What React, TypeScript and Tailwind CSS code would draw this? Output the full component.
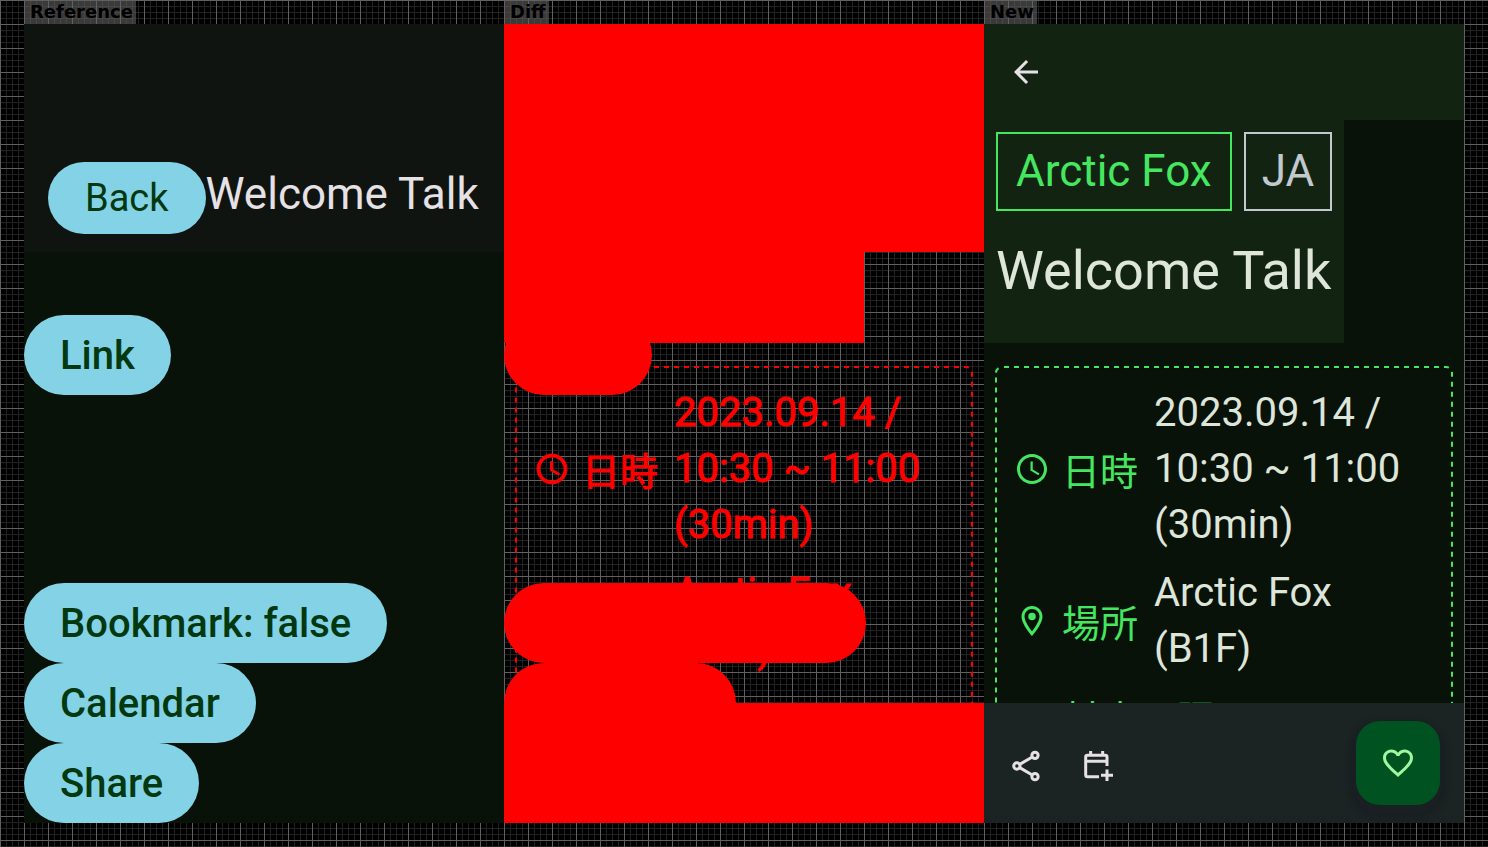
import React from "react";

const gridLines =
  "bg-black bg-[linear-gradient(to_right,#616161_1px,transparent_1px),linear-gradient(to_bottom,#616161_1px,transparent_1px),linear-gradient(to_right,#222222_1px,transparent_1px),linear-gradient(to_bottom,#222222_1px,transparent_1px)] bg-[size:24px_24px,24px_24px,6px_6px,6px_6px]";

const BACK = "M20 11H7.83l5.59-5.59L12 4l-8 8 8 8 1.41-1.41L7.83 13H20v-2z";
const CLOCK =
  "M11.99 2C6.47 2 2 6.48 2 12s4.47 10 9.99 10C17.52 22 22 17.52 22 12S17.52 2 11.99 2zM12 20c-4.42 0-8-3.58-8-8s3.58-8 8-8 8 3.58 8 8-3.58 8-8 8zm.5-13H11v6l5.25 3.15.75-1.23-4.5-2.67z";
const PIN =
  "M12 2C8.13 2 5 5.13 5 9c0 5.25 7 13 7 13s7-7.75 7-13c0-3.87-3.13-7-7-7zM7 9c0-2.76 2.24-5 5-5s5 2.24 5 5c0 2.88-2.88 7.19-5 9.88C9.92 16.21 7 11.85 7 9zM14.5 9a2.5 2.5 0 1 1-5 0 2.5 2.5 0 0 1 5 0z";
const HEART =
  "M16.5 3c-1.74 0-3.41.81-4.5 2.09C10.91 3.81 9.24 3 7.5 3 4.42 3 2 5.42 2 8.5c0 3.78 3.4 6.86 8.55 11.54L12 21.35l1.45-1.32C18.6 15.36 22 12.28 22 8.5 22 5.42 19.58 3 16.5 3zm-4.4 15.55l-.1.1-.1-.1C7.14 14.24 4 11.39 4 8.5 4 6.5 5.5 5 7.5 5c1.54 0 3.04.99 3.57 2.36h1.87C13.46 5.99 14.96 5 16.5 5c2 0 3.5 1.5 3.5 3.5 0 2.89-3.14 5.74-7.9 10.05z";

function Icon({ path, bold }: { path: string; bold?: boolean }) {
  return (
    <svg
      viewBox="0 0 24 24"
      className={`size-9 shrink-0 fill-current ${bold ? "stroke-current" : ""}`}
      strokeWidth={bold ? 0.6 : 0}
      aria-hidden="true"
    >
      <path d={path} />
    </svg>
  );
}

function Panel({ title, className, children }: { title: string; className: string; children: React.ReactNode }) {
  return (
    <section className="flex min-w-0 flex-1 flex-col">
      <h2 className="h-6 self-start bg-[#606060]/60 pr-[3px] pl-[6px] font-['DejaVu_Sans'] text-[18px] leading-6 font-bold text-black">
        {title}
      </h2>
      <div className={`flex flex-1 flex-col ${className}`}>{children}</div>
    </section>
  );
}

function Pill({ children }: { children: React.ReactNode }) {
  return (
    <button
      type="button"
      className="h-20 rounded-full bg-[#84d2e6] px-9 pt-[2px] text-[40px] leading-[56px] font-medium text-[#003910]"
    >
      {children}
    </button>
  );
}

function InfoRow({ path, label, diff, children }: { path: string; label: string; diff?: boolean; children: React.ReactNode }) {
  return (
    <div className="flex items-center">
      <div className={`flex w-[140px] shrink-0 items-center gap-3 ${diff ? "" : "text-[#45e660]"}`}>
        <Icon path={path} bold={diff} />
        <dt className="pt-[6px] text-[38px] leading-[56px]">{label}</dt>
      </div>
      <dd className="text-[40px] leading-[56px]">{children}</dd>
    </div>
  );
}

function InfoCard({ diff }: { diff?: boolean }) {
  return (
    <div
      className={`relative mx-[11px] mt-[23px] h-[337px] overflow-hidden ${
        diff ? "text-[#ff0000] [-webkit-text-stroke:1px_#ff0000]" : "text-[#dee5d9]"
      }`}
    >
      <svg className="absolute top-px left-px h-[400px] w-[calc(100%-2px)] overflow-visible" aria-hidden="true">
        <rect
          x="0"
          y="0"
          width="100%"
          height="480"
          rx="6"
          fill="none"
          stroke={diff ? "#ff0000" : "#45e660"}
          strokeWidth="2"
          strokeDasharray="5 5"
          strokeDashoffset="-2"
        />
      </svg>
      <dl className="flex flex-col gap-3 pt-[19px] pl-[19px]">
        <InfoRow path={CLOCK} label="日時" diff={diff}>
          2023.09.14 /<br />
          10:30 ~ 11:00
          <br />
          (30min)
        </InfoRow>
        <InfoRow path={PIN} label="場所" diff={diff}>
          Arctic Fox
          <br />
          (B1F)
        </InfoRow>
        {!diff && <dt className="pt-[3px] pl-12 text-[38px] leading-[56px] text-[#45e660]">対応言語</dt>}
      </dl>
    </div>
  );
}

export default function App() {
  return (
    <main className={`flex min-h-screen px-6 pb-6 font-[Roboto,'Noto_Sans_CJK_JP',sans-serif] ${gridLines}`}>
      <Panel title="Reference" className="items-start bg-[#081208]">
        <header className="flex h-[228px] w-full items-end bg-[#101411] pb-[18px] pl-6">
          <button
            type="button"
            className="h-[72px] rounded-full bg-[#84d2e6] px-[37px] text-[38px] leading-[56px] text-[#003910]"
          >
            Back
          </button>
          <h1 className="pb-3 text-[44px] leading-[56px] whitespace-nowrap text-[#e6e1e5]">Welcome Talk</h1>
        </header>
        <div className="mt-[63px] flex flex-1 flex-col items-start">
          <Pill>Link</Pill>
          <div className="mt-auto flex flex-col items-start">
            <Pill>Bookmark: false</Pill>
            <Pill>Calendar</Pill>
            <Pill>Share</Pill>
          </div>
        </div>
      </Panel>

      <Panel title="Diff" className="relative">
        <div className="h-[228px] bg-[#ff0000]" />
        <div className="h-[91px] w-3/4 bg-[#ff0000]" />
        <InfoCard diff />
        <div className="h-[120px] bg-[#ff0000]" />
        <div className="absolute inset-0 top-[291px] flex flex-col justify-between">
          <div className="h-20 w-[148px] rounded-full bg-[#ff0000]" />
          <div>
            <div className="h-20 w-[362px] rounded-full bg-[#ff0000]" />
            <div className="h-20 w-[232px] rounded-full bg-[#ff0000]" />
            <div className="h-20 w-[177px] rounded-full bg-[#ff0000]" />
          </div>
        </div>
      </Panel>

      <Panel title="New" className="bg-[#081208]">
        <header className="flex h-24 items-center bg-[#122411] pl-6 text-[#e6e1e5]">
          <button type="button" aria-label="Back">
            <Icon path={BACK} />
          </button>
        </header>
        <div className="h-[223px] w-3/4 bg-[#122411] px-3 pt-3">
          <div className="flex gap-3 text-[44px] leading-[75px] whitespace-nowrap">
            <span className="border-2 border-[#45e660] px-[18px] text-[#45e660]">Arctic Fox</span>
            <span className="border-2 border-[#c1c9cf] px-4 text-[#c1c9cf]">JA</span>
          </div>
          <h1 className="mt-6 text-[54px] leading-[72px] whitespace-nowrap text-[#dee5d9]">Welcome Talk</h1>
        </div>
        <InfoCard />
        <footer className="flex h-[120px] items-center justify-between bg-[#1b2422] px-6 text-[#e6e1e5]">
          <div className="flex gap-9 pt-[6px]">
            <button type="button" aria-label="Share">
              <svg viewBox="0 0 24 24" className="size-9 fill-none stroke-current" strokeWidth="2" aria-hidden="true">
                <circle cx="5.9" cy="12" r="2.1" />
                <circle cx="18" cy="4.9" r="2.1" />
                <circle cx="18" cy="19.1" r="2.1" />
                <path d="M7.8 10.9 16.2 6M7.8 13.1l8.4 4.9" />
              </svg>
            </button>
            <button type="button" aria-label="Add to calendar">
              <svg viewBox="0 0 24 24" className="size-9 fill-none stroke-current" strokeWidth="2" aria-hidden="true">
                <path d="M12.7 19.2H5Q3.8 19.2 3.8 18V6Q3.8 4.9 5 4.9H16.8Q18 4.9 18 6V12M3.8 8.8H18M7.1 2V5M15.1 2V5M18 14.3V22M14 18.2h8" />
              </svg>
            </button>
          </div>
          <button
            type="button"
            aria-label="Bookmark"
            className="flex size-[84px] items-center justify-center rounded-3xl bg-[#005320] text-[#9df8a0] shadow-[0_6px_4px_7px_#191f23]"
          >
            <Icon path={HEART} />
          </button>
        </footer>
      </Panel>
    </main>
  );
}
